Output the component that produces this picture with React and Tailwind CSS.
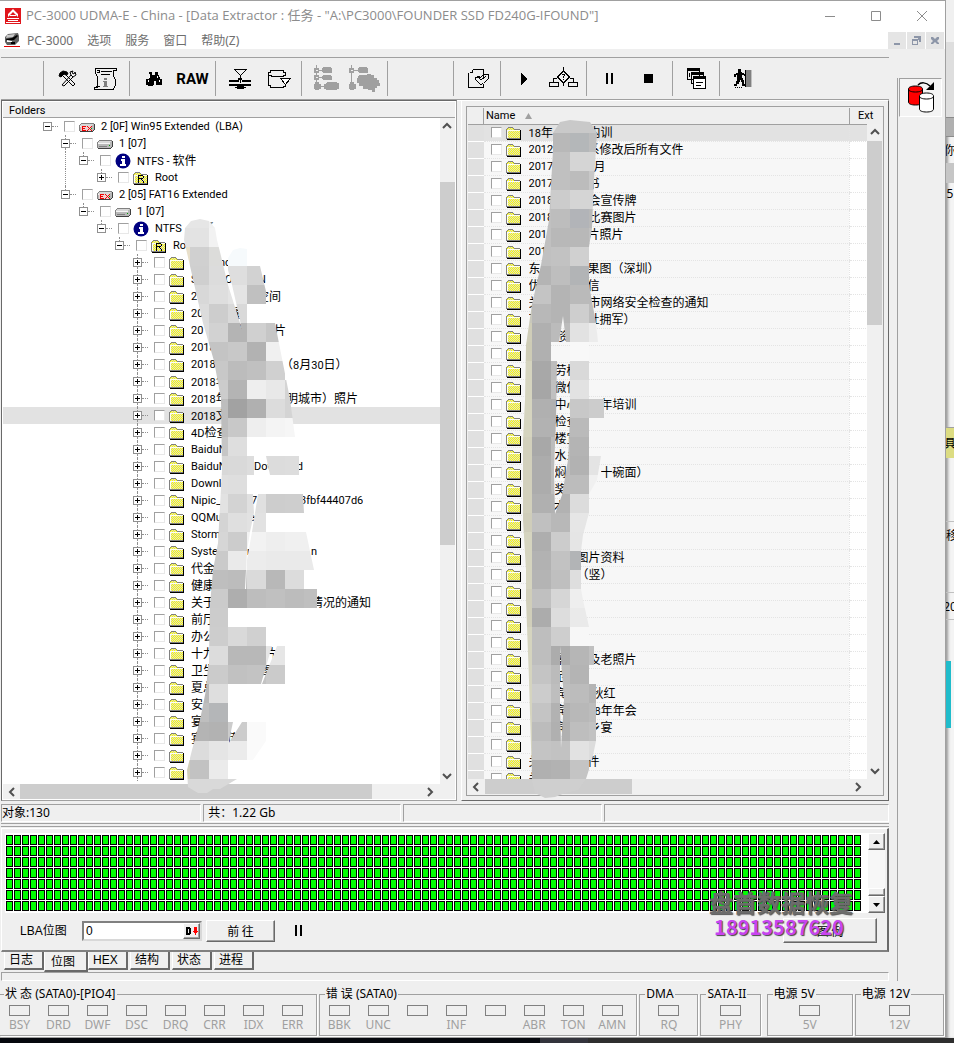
import React from "react";

const UI = "font-['Noto_Sans','Noto_Sans_CJK_SC',sans-serif]";

/* ---------- data ---------- */

// Each name is a list of [x offset, text] pieces; "lines" lists the depths whose guide line runs through the row.
const TREE = [
  { depth: 0, kind: "ex", open: true, name: [[0, "2 [0F] Win95 Extended  (LBA)"]] },
  { depth: 1, kind: "drive", open: true, name: [[0, "1 [07]"]], lines: [1] },
  { depth: 2, kind: "info", open: true, name: [[0, "NTFS - 软件"]], lines: [1] },
  { depth: 3, kind: "root", open: false, name: [[0, "Root"]], lines: [1] },
  { depth: 1, kind: "ex", open: true, name: [[0, "2 [05] FAT16 Extended"]] },
  { depth: 2, kind: "drive", open: true, name: [[0, "1 [07]"]] },
  { depth: 3, kind: "info", open: true, name: [[0, "NTFS"], [45, " 系"]] },
  { depth: 4, kind: "root", open: true, name: [[0, "Root"]] },
  ...[
    [[28, "nd"]],
    [[0, "S"], [34, "O"], [67, "N"]],
    [[0, "2"], [66, "空间"]],
    [[0, "20"], [38, "餐"]],
    [[0, "20"], [46, "作"], [83, "片"]],
    [[0, "2018"], [47, "0p"]],
    [[0, "2018"], [50, "餐"], [90, "（8月30日）"]],
    [[0, "2018年"]],
    [[0, "2018年"], [60, "月"], [95, "明城市）照片"]],
    [[0, "2018文"], [58, "爱"]],
    [[0, "4D检查"]],
    [[0, "BaiduN"]],
    [[0, "BaiduN"], [63, "Download"]],
    [[0, "Downlo"]],
    [[0, "Nipic_"], [60, "75"], [109, "3fbf44407d6"]],
    [[0, "QQMus"], [58, "el"]],
    [[0, "Storm"]],
    [[0, "System"], [56, "n"], [120, "n"]],
    [[0, "代金"]],
    [[0, "健康"]],
    [[0, "关于"], [120, "情况的通知"]],
    [[0, "前厅"]],
    [[0, "办公"]],
    [[0, "十九"], [74, "片"]],
    [[0, "卫生"], [70, "图"]],
    [[0, "夏总"]],
    [[0, "安"]],
    [[0, "宴"]],
    [[0, "宴"], [36, "传"]],
    [],
    [],
  ].map((name, i) => ({ depth: 5, kind: "folder", open: false, name, lines: [5], selected: i === 9 })),
];

const FILES = [
  [[0, "18年"], [60, "内训"]],
  [[0, "2012"], [59, "系修改后所有文件"]],
  [[0, "2017"], [65, "月"]],
  [[0, "2017"], [59, "书"]],
  [[0, "2018"], [60, "会宣传牌"]],
  [[0, "2018"], [60, "比赛图片"]],
  [[0, "201"], [59, "片照片"]],
  [[0, "201"]],
  [[0, "东"], [59, "果图（深圳）"]],
  [[0, "优"], [59, "信"]],
  [[0, "关"], [60, "市网络安全检查的通知"]],
  [[0, "百"], [59, "社拥军）"]],
  [[30, "资"]],
  [],
  [[26, "劳模"]],
  [[26, "微信"]],
  [[26, "中心"], [72, "年培训"]],
  [[26, "检查"]],
  [[26, "楼宣"]],
  [[26, "水乡"]],
  [[26, "焖肉"], [72, "十碗面）"]],
  [[26, "奖"]],
  [[24, "才"]],
  [],
  [],
  [[48, "图片资料"]],
  [[48, "（竖）"]],
  [],
  [],
  [],
  [],
  [[26, "景"], [60, "及老照片"]],
  [[26, "范"]],
  [[26, "宾"], [63, "秋红"]],
  [[26, "宾"], [66, "8年年会"]],
  [[26, "宾"], [60, "乡宴"]],
  [],
  [[0, "关"], [59, "件"]],
  [[0, "关"]],
];

/* ---------- small parts ---------- */

const CJK = /([\u2e80-\u9fff\uff00-\uffef]+)/;

function Mixed({ text }) {
  return text.split(CJK).map((run, i) =>
    CJK.test(run) ? (
      <span key={i} className="font-['Noto_Sans_CJK_SC',sans-serif] text-[12px]">{run}</span>
    ) : (
      <span key={i} className="font-[Roboto,sans-serif] text-[11px]">{run}</span>
    )
  );
}

function Name({ pieces }) {
  const first = pieces.length ? pieces[0][0] : 0;
  return (
    <span className="flex h-[17px] items-center pb-[2px] leading-[15px] whitespace-pre" style={{ paddingLeft: first }}>
      {pieces.map(([x, text], i) => (
        <span
          key={i}
          className="h-[15px] shrink-0 overflow-hidden text-[12px]"
          style={{ width: i + 1 < pieces.length ? pieces[i + 1][0] - x : "auto" }}
        >
          <Mixed text={text} />
        </span>
      ))}
    </span>
  );
}

function Tick() {
  return (
    <input
      type="checkbox"
      className="h-[11px] w-[11px] shrink-0 appearance-none border border-t-[#a0a0a0] border-r-[#e8e8e8] border-b-[#e8e8e8] border-l-[#a0a0a0] bg-white"
    />
  );
}

function Defs() {
  return (
    <svg className="absolute h-0 w-0" aria-hidden="true">
      <defs>
        <pattern id="dither" width="2" height="2" patternUnits="userSpaceOnUse">
          <rect width="2" height="2" fill="#ffff00" />
          <rect width="1" height="1" fill="#d8d8d8" />
          <rect x="1" y="1" width="1" height="1" fill="#d8d8d8" />
        </pattern>
      </defs>
    </svg>
  );
}

function NodeIcon({ kind }) {
  if (kind === "info")
    return (
      <svg width="16" height="16" viewBox="0 0 16 16" className="shrink-0">
        <circle cx="8" cy="8" r="7.5" fill="#000080" />
        <path d="M7 3h3v2H7zM6 6h4v5h1v2H5v-2h2V8H6z" fill="#fff" />
      </svg>
    );
  if (kind === "drive" || kind === "ex")
    return (
      <svg width="16" height="16" viewBox="0 0 16 16" className="shrink-0" shapeRendering="crispEdges">
        <path d="M1 5h14v7H1z" fill="#b8b8b8" />
        <path d="M2 4h13v1H2zM1 5h1v1H1zM0 6h1v6H0z" fill="#808080" />
        <path d="M2 5h12v1H2zM1 6h12v1H1z" fill="#d8d8d8" />
        <path d="M1 7h12v1H1z" fill="#f4f4f4" />
        <path d="M1 12h13v1H1zM14 11h1v1h-1zM15 5h1v6h-1z" fill="#404040" />
        <path d="M2 10h8v1H2z" fill="#808080" />
        <path d="M12 9h1v1h-1z" fill="#00a000" />
        {kind === "ex" && (
          <>
            <path d="M2 7h10v5H2z" fill="#f0d0d0" />
            <path d="M3 7h4v1H4v1h2v1H4v1h3v1H3zM8 7h1v1h1v1h1V8h1V7h1v1h-1v1h-1v1h1v1h1v1h-1v-1h-1v-1h-1v1H9v1H8v-1h1v-1h1V9H9V8H8z" fill="#f00000" />
          </>
        )}
      </svg>
    );
  return (
    <svg width="16" height="16" viewBox="0 0 16 16" className="shrink-0" shapeRendering="crispEdges">
      <path d="M1 4h1V3h1V2h4v1h1v1h6v9H1z" fill="url(#dither)" />
      <path d="M0 4h1v9H0zM1 3h1v1H1zM2 2h5v1H2zM7 3h1v1H7zM8 4h6v1H8zM0 13h14v1H0z" fill="#808080" />
      <path d="M1 5h13v1H1zM1 5h1v8H1z" fill="#fffff0" />
      <path d="M14 5h1v10h-1zM1 14h14v1H1z" fill="#000" />
      {kind === "root" && <path d="M5 5h5v1H5zM5 5h1v8H5zM10 6h1v2h-1zM6 8h4v1H6zM8 9h1v1H8zM9 10h1v1H9zM10 11h1v2h-1z" fill="#000" />}
    </svg>
  );
}

function Chevron({ dir }) {
  const d = { up: "M2 7l4-4 4 4", down: "M2 4l4 4 4-4", left: "M8 2L4 6l4 4", right: "M4 2l4 4-4 4" }[dir];
  return (
    <svg width="12" height="12" viewBox="0 0 12 12">
      <path d={d} fill="none" stroke="#505050" strokeWidth="2" />
    </svg>
  );
}

function VScroll({ before, size, total }) {
  return (
    <div className="flex w-[15px] shrink-0 flex-col bg-[#f0f0f0]">
      <button aria-label="向上滚动" className="flex h-[17px] items-center justify-center"><Chevron dir="up" /></button>
      <div className="min-h-0 flex-1">
        <div style={{ height: `${(before / total) * 100}%` }} />
        <div className="bg-[#cdcdcd]" style={{ height: `${(size / total) * 100}%` }} />
      </div>
      <button aria-label="向下滚动" className="flex h-[17px] items-center justify-center"><Chevron dir="down" /></button>
    </div>
  );
}

function HScroll({ size, total }) {
  return (
    <div className="flex h-[15px] shrink-0 bg-[#f0f0f0] pr-4">
      <button aria-label="向左滚动" className="flex w-[17px] items-center justify-center"><Chevron dir="left" /></button>
      <div className="flex-1">
        <div className="h-full bg-[#cdcdcd]" style={{ width: `${(size / total) * 100}%` }} />
      </div>
      <button aria-label="向右滚动" className="flex w-[17px] items-center justify-center"><Chevron dir="right" /></button>
    </div>
  );
}

/* ---------- toolbar ---------- */

function Glyph({ children, w = 30, h = 30, smooth }) {
  return (
    <svg width={w} height={h} viewBox={`0 0 ${w} ${h}`} shapeRendering={smooth ? "auto" : "crispEdges"} fill="none" stroke="#000">
      {children}
    </svg>
  );
}

const ICONS = {
  tools: (
    <Glyph smooth>
      <path d="M9 21L18 11M11 22l9-9M9 21l2 1M10 12l10 10M12 10l10 10M20 22l2-2" />
      <path d="M7 9l3-2 4 1 1 2-2 1-2-1-3 3-2-1z" fill="#000" />
      <path d="M18 11l-1-3 3-1-1 2 2 1 1-2 1 3-3 2z" fill="#fff" />
    </Glyph>
  ),
  script: (
    <Glyph>
      <path d="M4.500 4.500h20v2h-3v6l2 3v5l-2 5H2.500v-2.500h3V13l-2-4V4.500z" />
      <path d="M8.500 7.500h11M8.500 10.500h9M3.500 22.500h4M4.500 6.500h3v2h-3" />
      <path d="M12 14h3v2h-3zM11 17h4v5h1v1h-5v-1h1v-4h-1z" fill="#808080" stroke="none" />
    </Glyph>
  ),
  find: (
    <Glyph>
      <path d="M10 8h3v3h3V8h3v3h1v2h1v3h1v5h-5v-4h-2v4h-1v1H9v-6h1v-4h1v-2h-1z" fill="#000" stroke="none" />
      <path d="M7 15h6v6H7zM17 15h6v6h-6z" fill="#000" stroke="none" />
      <path d="M9 16v2M10 12v2M18 12v2M20 16v2" stroke="#fff" />
    </Glyph>
  ),
  raw: <span className="font-[Roboto,sans-serif] text-[15px] leading-[18px] font-bold">RAW</span>,
  compress: (
    <Glyph>
      <path d="M9.500 5.500h12l-6 6zM15.500 11v8" />
      <path d="M4 16h10v2H4zM17 16h9v2h-9zM4 20h22v2H4zM12 22h7v3h-7zM10 23h11v1H10zM13 14h4v2h-4z" fill="#000" stroke="none" />
    </Glyph>
  ),
  disk: (
    <Glyph>
      <path d="M4.500 8.500h2v-2h13v2h2v3h-2v1h-12v-1h-3zM4.500 9v12h2v2h13v-1h2v-2" />
      <path d="M16.500 14.500h10l-5 6z" fill="#fff" />
    </Glyph>
  ),
  tree: (
    <Glyph>
      <g fill="#a0a0a0" stroke="none">
        <path d="M5 1h1v22H5zM3 4h5v5H3zM3 11h5v5H3zM3 20h7v5H3zM4 18h4v8H4zM8 6h5v1H8zM8 13h5v1H8zM8 22h5v1H8z" />
        <path d="M12 3h8v1h1v5h-9V8h-1V4h1zM12 11h8v1h1v4h-9v-1h-1v-3h1zM16 18h10v1h2v6h-2v1H15v-1h-2v-5h2v-1h1z" />
      </g>
      <path d="M4.500 6.500h2M4.500 13.500h2" stroke="#efefef" />
    </Glyph>
  ),
  treeMap: (
    <Glyph w={34}>
      <g fill="#a0a0a0" stroke="none">
        <path d="M3 1h1v22H3zM1 4h5v5H1zM1 20h7v5H1zM2 18h4v8H2zM6 6h5v1H6zM11 3h8v1h1v5h-9V8h-1V4h1z" />
        <path d="M11 11h8v-1h4v1h3v3h3v2h2v3h1v3h-3v2h-2v4h-3v-2h-4v-1h-5v-3h-4v-3H9v-5h1v-2h1z" />
      </g>
      <path d="M2.500 6.500h2" stroke="#efefef" />
    </Glyph>
  ),
  exportDoc: (
    <Glyph>
      <path d="M9.500 5.500h11v5M6.500 8.500h3v-3M5.500 9v14h15v-3M20.500 10v3" />
      <path d="M12.500 13.500l3-1 2 1 3-3h5v4l-5 5-3 1-3-3-2-2zM13 14l2-1 3 3 5-4" />
    </Glyph>
  ),
  play: <Glyph><path d="M11 9v12l6-6z" fill="#000" stroke="none" /></Glyph>,
  flow: (
    <Glyph>
      <path d="M14.500 3v4l6 6-6 6-6-6 6-6M8 14.500H4.500v4M21 14.500h3.500v4M0.500 18.500h9v4h-9zM19.500 18.500h9v4h-9zM14.500 20v2" />
      <path d="M13 10h3v2h-1v2h-1v-2h1v-1h-2zM14 15h1v1h-1z" fill="#000" stroke="none" />
    </Glyph>
  ),
  pause: <Glyph><path d="M10 9h2v11h-2zM15 9h2v11h-2z" fill="#000" stroke="none" /></Glyph>,
  stop: <Glyph><path d="M9 10h9v9H9z" fill="#000" stroke="none" /></Glyph>,
  windows: (
    <Glyph>
      <path d="M5.500 5.500h12v10h-12zM9.500 9.500h12v10h-12z" fill="#efefef" />
      <path d="M11.500 13.500h12v11h-12z" fill="#fff" />
      <path d="M5 4h13v3H5zM9 8h13v3H9zM11 12h13v3H11zM7 9h1v4H7z" fill="#000" stroke="none" />
      <path d="M13.500 18.500h7M13.500 21.500h5" />
    </Glyph>
  ),
  exit: (
    <Glyph>
      <path d="M9 5h3v3h1v1h2v1h1v2h-1v-1h-2v3h1v2h1v4h1v2h-3v-4h-1v-2h-1v2h-1v2H8v2H5v-2h2v-3h1v-6H7v2H5v-3h2V9h2z" fill="#000" stroke="none" />
      <path d="M17 6h6v17h-6z" fill="#808080" stroke="none" />
      <path d="M16.500 6v17" />
      <path d="M22.500 6v17" stroke="#c0c0c0" />
      <path d="M6 23.500h7" strokeDasharray="1 1" />
    </Glyph>
  ),
};

const GROUPS = [
  [["工具", "tools"], ["脚本", "script"]],
  [["查找", "find"], ["RAW", "raw"]],
  [["压缩", "compress"], ["磁盘", "disk"]],
  [["树", "tree"], ["图", "treeMap"]],
  null,
  [["导出", "exportDoc"]],
  [["开始", "play"], ["流程", "flow"]],
  [["暂停", "pause"], ["停止", "stop"]],
  [["窗口", "windows"]],
  [["退出", "exit"]],
];

function Toolbar() {
  return (
    <div className="flex h-[43px] border-y border-[#a0a0a0] py-[3px] shadow-[0_1px_0_#fff]">
      <div className="w-[43px] border-r border-[#a0a0a0]" />
      {GROUPS.map((g, i) =>
        g === null ? (
          <div key={i} className="w-[66px] border-r border-[#a0a0a0]" />
        ) : (
          <div key={i} className="flex border-r border-[#a0a0a0] pr-[3px] pl-1 last:border-0">
            {g.map(([label, icon]) => (
              <button key={icon} aria-label={label} className="flex w-[39px] items-center justify-center">
                {ICONS[icon]}
              </button>
            ))}
          </div>
        )
      )}
    </div>
  );
}

/* ---------- panels ---------- */

const DOTS = "border-l border-dotted border-[#909090]";

function TreeRow({ node }) {
  const cols = Array.from({ length: node.depth }, (_, i) => i);
  return (
    <li className={`flex h-[17px] items-center pl-[39px] ${node.selected ? "bg-[#e2e2e2]" : ""}`}>
      {cols.map((c) => (
        <span key={c} className="flex h-full w-[18px] shrink-0 pl-[5px]">
          {node.lines?.includes(c) && <span className={`h-full ${DOTS}`} />}
        </span>
      ))}
      <span className="flex h-full w-[10px] shrink-0 flex-col items-center">
        <span className={`w-0 flex-1 ${node.depth ? DOTS : ""}`} />
        <button
          aria-label={node.open ? "折叠" : "展开"}
          className="flex h-[9px] w-[9px] shrink-0 items-center justify-center border border-[#909090] bg-white"
        >
          <svg width="5" height="5" viewBox="0 0 5 5" shapeRendering="crispEdges">
            <path d={node.open ? "M0 2h5v1H0z" : "M0 2h5v1H0zM2 0h1v5H2z"} fill="#000" />
          </svg>
        </button>
        <span className={`w-0 flex-1 ${node.lines?.includes(node.depth) ? DOTS : ""}`} />
      </span>
      <span className="mr-[6px] w-[6px] shrink-0 border-t border-dotted border-[#909090]" />
      <label className="flex items-center">
        <Tick />
        <span className="ml-1"><NodeIcon kind={node.kind} /></span>
        <span className="ml-[6px]"><Name pieces={node.name} /></span>
      </label>
    </li>
  );
}

function FoldersPanel() {
  return (
    <section className="flex min-w-0 flex-col border border-t-[#696969] border-r-[#a0a0a0] border-b-[#a0a0a0] border-l-[#696969] bg-white p-px">
      <h2 className="h-4 border-b border-[#a0a0a0] bg-[#efefef] pl-[6px] font-[Roboto,sans-serif] text-[11px] leading-[17px]">
        Folders
      </h2>
      <div className="flex min-h-0 flex-1">
        <ul className="min-w-0 flex-1 overflow-hidden">
          {TREE.map((n, i) => <TreeRow key={i} node={n} />)}
        </ul>
        <VScroll before={47} size={363} total={632} />
      </div>
      <HScroll size={352} total={402} />
    </section>
  );
}

function FilesPanel() {
  return (
    <section className="flex min-w-0 border border-t-white border-r-[#696969] border-b-[#696969] border-l-white p-1 pt-[5px]">
      <div className="flex min-w-0 flex-1 flex-col border border-[#a0a0a0] p-px">
        <div className="relative h-[671px] overflow-hidden">
          <table className="w-full table-fixed border-collapse bg-[#f7f7f7]">
            <thead>
              <tr className="h-4 border-b border-[#a0a0a0] bg-[#efefef] font-[Roboto,sans-serif] text-[11px] leading-[15px]">
                <th className="w-[16px] border-r border-[#a0a0a0] p-0" />
                <th className="border-r border-[#a0a0a0] p-0 pl-[2px] text-left font-normal">
                  <span className="flex items-center gap-[10px]">
                    Name
                    <svg width="7" height="6" viewBox="0 0 7 6"><path d="M3.500 0L7 6H0z" fill="#a0a0a0" /></svg>
                  </span>
                </th>
                <th className="w-[33px] p-0 font-normal">Ext</th>
              </tr>
            </thead>
            <tbody>
              {FILES.map((name, i) => (
                <tr key={i} className={`h-[17px] ${i === 0 ? "bg-[#e2e2e2]" : ""}`}>
                  <td className="border-b border-white bg-[#e0e0e0] p-0" />
                  <td className="border-b border-dotted border-[#e4e4e4] p-0 pl-[7px]">
                    <label className="flex h-4 items-center">
                      <Tick />
                      <span className="ml-1"><NodeIcon kind="folder" /></span>
                      <span className="ml-[7px]"><Name pieces={name} /></span>
                    </label>
                  </td>
                  <td className={`border-b border-l border-dotted border-[#e4e4e4] p-0 ${i ? "bg-white" : ""}`} />
                </tr>
              ))}
            </tbody>
          </table>
          <div className="absolute top-4 right-0 bottom-0 flex"><VScroll before={0} size={184} total={621} /></div>
        </div>
        <HScroll size={147} total={364} />
      </div>
    </section>
  );
}

const RAISED = "border border-t-white border-l-white border-r-[#696969] border-b-[#696969] shadow-[inset_-1px_-1px_0_#a0a0a0]";

function BitmapPanel() {
  return (
    <section className="relative mt-px border border-t-white border-r-2 border-b-2 border-l-white border-r-[#696969] border-b-[#808080] pt-1 pr-[2px] pb-[2px] pl-[3px]">
      <div className="flex">
        <div className="grid flex-1 auto-rows-[10px] grid-cols-[repeat(auto-fill,7px)] gap-px bg-white pt-[2px] pr-1 pb-[2px] pl-px">
          {Array.from({ length: 749 }, (_, i) => (
            <span key={i} className="border border-black bg-[#00ff00]" />
          ))}
        </div>
        <div className="flex w-[17px] flex-col bg-[#f7f7f7]">
          <button aria-label="向上" className={`flex h-[17px] items-center justify-center bg-[#efefef] ${RAISED}`}>
            <svg width="7" height="4" viewBox="0 0 7 4"><path d="M0 4l3.500-4L7 4z" /></svg>
          </button>
          <div className="flex-1" />
          <div className={`h-2 bg-[#efefef] ${RAISED}`} />
          <button aria-label="向下" className={`flex h-[17px] items-center justify-center bg-[#efefef] ${RAISED}`}>
            <svg width="7" height="4" viewBox="0 0 7 4"><path d="M0 0l3.500 4L7 0z" /></svg>
          </button>
        </div>
      </div>
      <div className="flex h-[35px] items-center pr-2 pl-[15px] text-[13px]">
        <label htmlFor="lba" className="w-[62px] font-['Liberation_Sans','Noto_Sans_CJK_SC',sans-serif] text-[12px]">LBA位图</label>
        <div className="flex h-5 w-[120px] border-2 border-t-[#808080] border-r-[#d8d8d8] border-b-[#d8d8d8] border-l-[#808080] bg-white">
          <input id="lba" defaultValue="0" className="min-w-0 flex-1 px-[2px] font-['Liberation_Sans',sans-serif] text-[12px] outline-none" />
          <button aria-label="数制" className={`flex w-[17px] items-center justify-center bg-[#efefef] ${RAISED}`}>
            <svg width="12" height="8" viewBox="0 0 12 8" shapeRendering="crispEdges">
              <path fillRule="evenodd" d="M0 0h4v1h1v6H4v1H0zM2 2v4h1V2z" />
              <path d="M8 0h3v4h1v1h-1v1h-1v2H9V6H8V5H7V4h1z" fill="#f00" />
            </svg>
          </button>
        </div>
        <button className={`ml-1 h-[22px] w-[69px] font-['Noto_Sans_CJK_SC',sans-serif] text-[12px] leading-none ${RAISED}`}>前 往</button>
        <button aria-label="暂停" className="ml-[20px]">
          <svg width="8" height="11" viewBox="0 0 8 11" shapeRendering="crispEdges"><path d="M0 0h2v11H0zM5 0h2v11H5z" /></svg>
        </button>
        <div className="flex-1" />
        <button className={`h-[25px] w-[94px] font-['Noto_Sans_CJK_SC',sans-serif] text-[12px] leading-none ${RAISED}`}>图 例</button>
      </div>
      <div className="absolute right-[34px] bottom-[12px] flex flex-col text-center font-['Noto_Sans_CJK_SC',sans-serif] font-bold">
        <span className="text-[24px] leading-[28px] text-[#6c6c6c] [text-shadow:1px_1px_1px_#555]">盘首数据恢复</span>
        <span className="pr-1 text-[20px] leading-[22px] text-[#c844f0] [text-shadow:1px_1px_1px_#444]">18913587620</span>
      </div>
    </section>
  );
}

const TABS = ["日志", "位图", "HEX", "结构", "状态", "进程"];

function Tabs() {
  return (
    <div role="tablist" className="flex h-5 items-start gap-[2px] pl-[3px] font-['Liberation_Sans','Noto_Sans_CJK_SC',sans-serif] text-[12px]">
      {TABS.map((t) => (
        <button
          key={t}
          role="tab"
          aria-selected={t === "位图"}
          className={`border-r-2 border-b-2 border-l border-[#696969] border-l-white px-1 text-left leading-[15px] whitespace-nowrap ${
            t === "位图" ? "-mx-[2px] h-5 w-[44px] pt-[2px] pl-[6px]" : "h-[18px] w-[40px]"
          }`}
        >
          {t}
        </button>
      ))}
    </div>
  );
}

const LEDS = [
  ["状 态 (SATA0)-[PIO4]", ["BSY", "DRD", "DWF", "DSC", "DRQ", "CRR", "IDX", "ERR"], "justify-start"],
  ["错 误 (SATA0)", ["BBK", "UNC", "", "INF", "", "ABR", "TON", "AMN"], "justify-start"],
  ["DMA", ["RQ"], "justify-center"],
  ["SATA-II", ["PHY"], "justify-center"],
  ["电源 5V", ["5V"], "justify-center"],
  ["电源 12V", ["12V"], "justify-center"],
];

function StatusGroups() {
  return (
    <div className="grid grid-cols-[316fr_318fr_59fr_60fr_90fr_89fr] gap-x-[2px] pr-px text-[12px]">
      {LEDS.map(([title, leds, align], i) => (
        <fieldset
          key={title}
          className={`h-[49px] min-w-0 border border-[#a0a0a0] shadow-[1px_1px_0_#fff] ${i === 4 ? "ml-1" : ""} ${i === 0 ? "border-l-0" : ""}`}
        >
          <legend className={`px-px leading-[14px] whitespace-nowrap ${i ? "ml-[5px]" : "ml-1"}`}>{title}</legend>
          <div className={`flex pt-1 ${align}`}>
            {leds.map((l, k) => (
              <div key={k} className="flex w-[39px] shrink-0 flex-col items-center">
                <span className="h-[11px] w-[21px] border border-[#808080]" />
                <span className="mt-px leading-[15px] text-[#a0a0a0]">{l}</span>
              </div>
            ))}
          </div>
        </fieldset>
      ))}
    </div>
  );
}

/* ---------- pixelated privacy mask ---------- */

const CELL = 19;

// row: [first column, grey values...]
const LEFT_MASK = {
  11: [9, "e6", "e6", "f0"], 12: [9, "e2", "e3", "f2"], 13: [9, "e8dfca", "d0", "dcdcda", "f6fafc"],
  14: [9, "d8", "cf", "dc", "de", "d2"], 15: [10, "d8", "de", "e4", "c0"], 16: [10, "dc", "cd", "d9"],
  17: [10, "dd", "d2", "b4", "d0", "c6"], 18: [10, "d8", "c4", "c8", "b2", "f0"], 19: [11, "c8", "bc", "c0", "d0"],
  20: [11, "cc", "b4", "ee", "e8", "d4"], 21: [11, "bd", "a2", "b0", "dc", "d4"], 22: [11, "bd", "c8", "ee", "f4", "f6"],
  23: [11, "c6", "de"], 24: [11, "d8", "d9", "dd", "dc", "dd"], 25: [11, "df", "de"],
  26: [11, "e2", "d3", "e0", "cd", "ce"], 27: [11, "d4", "df", "e2"], 28: [11, "d6", "cc", "f2", "ee", "f0", "f0"],
  29: [11, "ca", "ea", "ec", "ea", "ea", "ea"], 30: [11, "be", "bc", "da", "b8", "dc"],
  31: [11, "cb", "ae", "bd", "c0", "bc", "bf"], 32: [11, "cc"], 33: [11, "cd", "d9", "d0"],
  34: [11, "dc", "b8", "b8", "e6"], 35: [10, "c8", "cb", "c1", "c3", "cb"], 36: [10, "b8", "de"],
  37: [10, "be", "b4b6b8"], 38: [10, "b4", "b2", "cc", "fa"], 39: [10, "dc", "e5", "eb", "fa"],
  40: [9, "d0ceb8", "c2", "eb"], 41: [9, "d9", "d9", "d9", "d9"],
};
const LEFT_SHAPE = [
  "M184 240L185 228L191 221L200 219L209 221L215 228L217 240L221 256L228 285L240 323L247 361L252 385L262 420L263 437L254 437L254 475L253 494L254 513L250 532L247 551L245 589H317V646H272L261 684L266 722H233L229 741L240 760L237 779L220 789L213 789L207 793H198L188 787L187 770L192 750L200 720L206 690L209 655L210 605L213 570L218 543L222 470L221 399L214 361L203 323L190 266Z",
  "M228 258L233 250L240 248L247 249V266H260L269 304V323H275L290 399L295 437H263L260 420L252 385L244 350L240 320L232 285L228 270Z",
  "M266 456H299V475H270Z",
  "M258 494H303L304 513H266V532H306L314 570H304V589H246L247 560L252 532Z",
  "M277 646H285V684H262Z",
  "M242 722H266V741L253 760H230V741Z",
];

const RIGHT_MASK = {
  6: [28, "c9", "c9", "c9", "c9"], 7: [28, "c4", "b8", "b4b7b9", "bd"], 8: [28, "c4", "c0", "d5", "d5"],
  9: [28, "c4", "c0", "bc", "c8"], 10: [28, "c4", "cc", "d5", "d5"], 11: [28, "c0", "bd", "b2b4b8", "b8"],
  12: [28, "c0", "b8", "b8", "c0"], 13: [28, "c0", "c2", "d0"], 14: [28, "b4", "be", "b2b4b6"],
  15: [28, "c4", "b4", "ba", "ba"], 16: [27, "c8c7bb", "b8", "b4", "ce", "bd"], 17: [27, "cfcdb8", "b0", "bb", "e2", "ec"],
  18: [27, "ceccb6", "b0", "f8", "f8"], 19: [27, "d5d4bf", "a8", "bc", "d9"], 20: [27, "d5d4bf", "a6", "c0", "e2"],
  21: [27, "d5d4bf", "b0", "b0", "c8", "cc"], 22: [27, "d5d4bf", "b2", "b2", "ba"], 23: [27, "d2d0bc", "a8", "bc", "b4"],
  24: [27, "d2d0bc", "ac", "bc", "b2", "e4"], 25: [27, "d2d0bc", "ac", "bc", "bc", "f0"], 26: [27, "d2d0bc", "b0", "b2", "dc"],
  27: [27, "cfcdba", "c0", "b8", "e6"], 28: [27, "d5d4bf", "ae", "cc", "e5"], 29: [27, "d5d4bf", "b2", "c2", "b2b4b6"],
  30: [27, "d5d4bf", "b4", "bf", "de"], 31: [27, "d0ceba", "c0", "d6", "ee"], 32: [27, "d0ceba", "ac", "dd", "ea"],
  33: [27, "d5d4bf", "be", "ce", "f7"], 34: [27, "d5d4bf", "be", "ac", "b6", "c0"], 35: [27, "d5d4bf", "c4", "bb", "b4"],
  36: [27, "d5d4bf", "cc", "be", "bc", "b4"], 37: [27, "d5d4bf", "c4", "b2", "b8", "bc"], 38: [27, "d5d4bf", "bc", "b0", "be", "c2"],
  39: [27, "d5d4bf", "c4", "c2", "e2", "dc"], 40: [27, "d5d4bf", "b0", "b2", "c4"], 41: [27, "cf", "cf", "cf", "cf"],
};
const RIGHT_SHAPE = [
  "M553 150V133L560 122L570 120L590 122L597 133L594 180L592 228L589 247V285L596 323L598 342H589V399H604V418H589V456H601L597 480L589 494V513L583 535L581 551V589L583 600L589 627V646H594V665H589V684H596V741L592 760L586 779L578 790L565 793L555 797L545 798L535 793L532 780L529 680L526 600V570L523 520V440L525 400L526 345L532 304L541 265L549 220Z" +
    "M563 316L559 342H551V361H557L556 420L554 470L555 514L562 495L568 460L570 420V361V342H566Z" +
    "M560 646L564 700L561 748L560 700Z",
];

function Mask({ id, cells, shapes }) {
  return (
    <g clipPath={`url(#${id})`}>
      <clipPath id={id}>
        {shapes.map((d, i) => <path key={i} d={d} clipRule="evenodd" />)}
      </clipPath>
      {Object.entries(cells).flatMap(([row, [start, ...tones]]) =>
        tones.map((t, i) => (
          <rect
            key={`${row}-${i}`}
            x={(start + i) * CELL}
            y={row * CELL}
            width={CELL}
            height={CELL}
            fill={`#${t.length === 2 ? t + t + t : t}`}
          />
        ))
      )}
    </g>
  );
}

/* ---------- window ---------- */

function TitleBar() {
  return (
    <header className="bg-white text-[#8c8c8c]">
      <div className="flex h-[30px] items-center border-t border-[#a0a0a0] pl-[5px]">
        <svg width="16" height="16" viewBox="0 0 16 16">
          <path d="M0 0h16v16H0z" fill="#e0161c" />
          <path d="M8 1L3 6v3l5-5 5 5V6zM5 7h6v1H5zM2 10h12v1H2zM3 12h10v1H3zM1 14h14v1H1z" fill="#fff" />
        </svg>
        <h1 className="flex-1 pl-[5px] font-['Open_Sans','Noto_Sans_CJK_SC',sans-serif] text-[13px] whitespace-nowrap">
          PC-3000 UDMA-E - China - [Data Extractor : 任务 - "A:\PC3000\FOUNDER SSD FD240G-IFOUND"]
        </h1>
        {[["最小化", "M0 5.500h10"], ["最大化", "M0.500 0.500h9v9h-9z"], ["关闭", "M0 0l10 10M10 0L0 10"]].map(([l, d]) => (
          <button key={l} aria-label={l} className="flex w-[46px] items-center justify-center">
            <svg width="10" height="10" viewBox="0 0 10 10" fill="none" stroke="#8c8c8c"><path d={d} /></svg>
          </button>
        ))}
      </div>
      <nav className="flex h-[19px] items-center pl-1 text-[12px] text-[#6e6e6e]">
        <svg width="16" height="16" viewBox="0 0 16 16" className="mr-[7px]">
          <path d="M1 5l3-3 10-1 1 3v5l-4 4H3l-2-3z" fill="#606060" />
          <path d="M3 3l8-1-2 3-7 1z" fill="#c8c8c8" />
          <path d="M2 7l6-1 5-3 1 1-4 4-7 1zM7 10h4v2H7z" fill="#000" />
          <path d="M3 8l5 1v1H3z" fill="#fff" />
          <path d="M0 14h16v1H0z" fill="#e00000" />
        </svg>
        <div className="flex flex-1 gap-[14px] pt-[2px]">
          {["PC-3000", "选项", "服务", "窗口", "帮助(Z)"].map((m) => <button key={m}>{m}</button>)}
        </div>
        <div className="flex gap-px self-end pr-px">
          {[["最小化文档", "M2 8h6v2H2z"], ["还原文档", "M3 1h7v6H8V5H7V3H3zM1 4h6v6H1zM2 6v3h4V6z"], ["关闭文档", "M1 2h2l2 2 2-2h2v2L7 6l2 2v1H7L5 7 3 9H1V8l2-2-2-2z"]].map(([l, d]) => (
            <button key={l} aria-label={l} className="flex h-[17px] w-[18px] items-center justify-center bg-[#e5e5e5]">
              <svg width="11" height="11" viewBox="0 0 11 11"><path fillRule="evenodd" d={d} fill="#8d96a8" /></svg>
            </button>
          ))}
        </div>
      </nav>
    </header>
  );
}

function SideBar() {
  return (
    <aside className="mt-[21px] ml-2 flex-1 border-l border-[#a0a0a0] pl-px">
      <button aria-label="数据提取" className="flex h-[39px] w-[43px] items-center justify-center border border-t-[#a0a0a0] border-r-white border-b-white border-l-[#a0a0a0] bg-[#f4f4f4]">
        <svg width="28" height="32" viewBox="0 0 28 32">
          <path d="M1.500 7c0-2 3-3 7-3s7 1 7 3v13c0 2-3 3-7 3s-7-1-7-3z" fill="#f00" stroke="#000" />
          <path d="M1.500 7c0 2 3 3 7 3s7-1 7-3" fill="none" stroke="#000" />
          <path d="M12.500 14c0-2 3-3 7-3s7 1 7 3v13c0 2-3 3-7 3s-7-1-7-3z" fill="#fff" stroke="#000" />
          <path d="M12.500 14c0 2 3 3 7 3s7-1 7-3" fill="none" stroke="#000" />
          <path d="M11 3c3-3 8-3 12 1" fill="none" stroke="#000" strokeWidth="1.500" />
          <path d="M27 0v8h-8z" />
        </svg>
      </button>
    </aside>
  );
}

function Backdrop() {
  return (
    <div className="flex w-2 shrink-0 flex-col overflow-hidden bg-[#f4f4f4] text-[12px] leading-[27px] whitespace-nowrap shadow-[inset_3px_0_3px_-1px_#9a9a9a]">
      <div className="h-[42px] bg-[#f0f0f0]" />
      <div className="h-[75px] bg-[#dedede]" />
      <div className="h-5 border-y border-[#8a8a8a] bg-[#b0b0b0]" />
      <div className="flex h-[26px] justify-center">你</div>
      <div className="h-5 bg-[#c6c6c6]" />
      <div className="flex h-[244px] justify-center leading-[22px]">5</div>
      <div className="flex h-[31px] items-center justify-center border-t border-[#a0a0a0] bg-[#dcdc82]">具</div>
      <div className="h-[64px] border-b border-[#c0c0c0]" />
      <div className="h-[70px]">移</div>
      <div className="flex h-[28px] justify-center border-y border-[#c0c0c0]">20</div>
      <div className="mt-[41px] mr-[3px] h-[67px] bg-[#20bccb]" />
    </div>
  );
}

export default function App() {
  return (
    <div className={`relative flex min-h-[1043px] flex-col overflow-hidden bg-[#16181c] text-black ${UI}`}>
      <Defs />
      <div className="flex">
        <main className="flex min-w-0 flex-1 flex-col border-r border-b border-[#a0a0a0] bg-[#efefef] pb-px">
          <TitleBar />
          <div className="flex pt-2">
            <div className="ml-px min-w-0 flex-1">
              <Toolbar />
              <div className="grid grid-cols-[455fr_428fr] gap-1">
                <FoldersPanel />
                <FilesPanel />
              </div>
              <div className="mt-[3px] grid grid-cols-[200fr_198fr_198fr_285fr] gap-[2px] border-b border-[#a0a0a0] pb-px text-[12px] leading-4">
                {["对象:130", "共：1.22 Gb", "", ""].map((t, i) => (
                  <div key={i} className={`h-[18px] border border-t-[#a0a0a0] border-r-white border-b-white border-l-[#a0a0a0] ${i === 1 ? "pl-1" : ""}`}>{t}</div>
                ))}
              </div>
              <div className="mt-[2px] border-t border-[#a0a0a0]" />
              <BitmapPanel />
              <Tabs />
              <div className="h-[9px] border border-t-[#a0a0a0] border-r-white border-b-white border-l-[#a0a0a0]" />
            </div>
            <div className="flex w-[56px] shrink-0 flex-col"><SideBar /></div>
          </div>
          <div className="mt-[6px]"><StatusGroups /></div>
        </main>
        <Backdrop />
      </div>
      <div className="flex flex-1">
        <div className="flex-[540] bg-[#05070d]" />
        <div className="flex-[48] bg-[#33343c]" />
        <div className="flex-[366] bg-[#2e2e2e]" />
      </div>
      <svg width="954" height="1043" viewBox="0 0 954 1043" shapeRendering="crispEdges" aria-hidden="true" className="pointer-events-none absolute top-0 left-0">
        <Mask id="mask-left" cells={LEFT_MASK} shapes={LEFT_SHAPE} />
        <Mask id="mask-right" cells={RIGHT_MASK} shapes={RIGHT_SHAPE} />
      </svg>
    </div>
  );
}
